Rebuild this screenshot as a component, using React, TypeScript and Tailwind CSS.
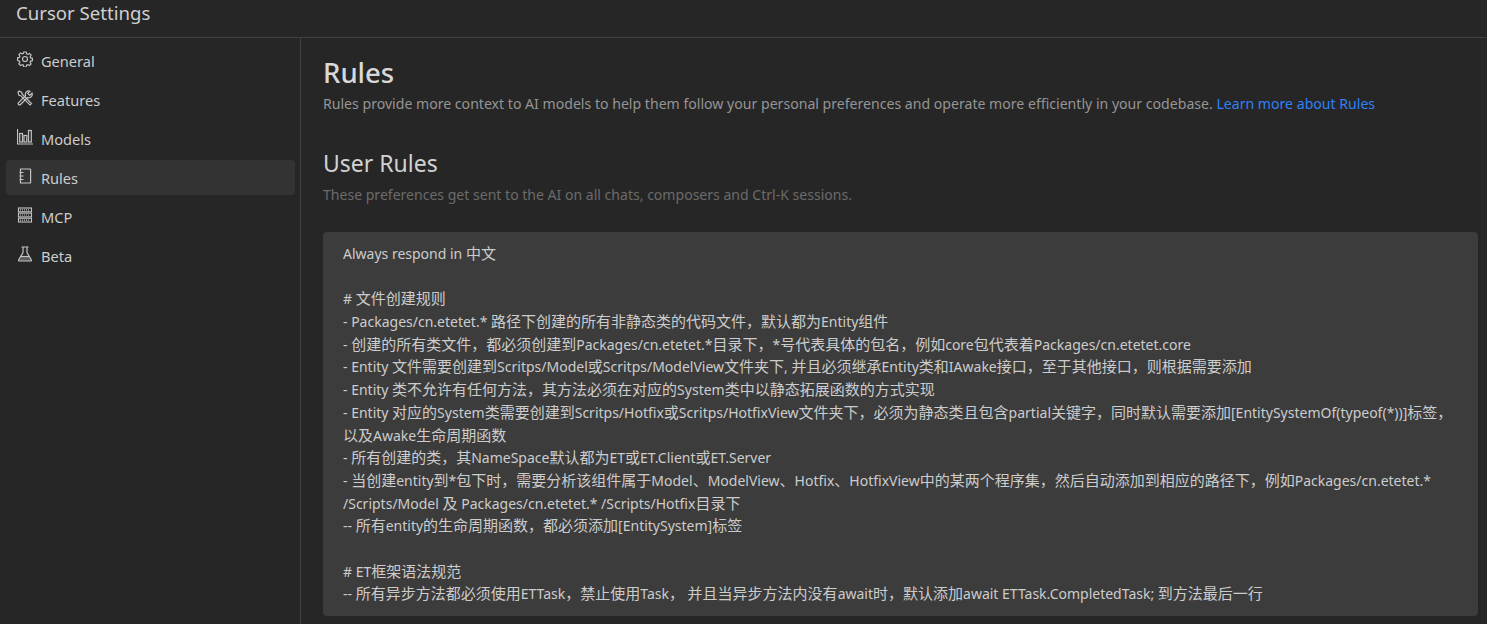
import type { ReactNode } from "react";

const font = "font-['Noto_Sans','Noto_Sans_CJK_SC',sans-serif]";

const GearIcon = () => (
  <svg width="16" height="16" viewBox="0 0 16 16" fill="none" stroke="currentColor" strokeWidth="1.2">
    <path d="M6.8 1h2.4l.4 1.9 1.1.5 1.7-1 1.7 1.7-1 1.7.5 1.1 1.9.4v2.4l-1.9.4-.5 1.1 1 1.7-1.7 1.7-1.7-1-1.1.5-.4 1.9H6.8l-.4-1.9-1.1-.5-1.7 1-1.7-1.7 1-1.7-.5-1.1L.5 9.2V6.8l1.9-.4.5-1.1-1-1.7 1.7-1.7 1.7 1 1.1-.5z" />
    <circle cx="8" cy="8" r="2.5" />
  </svg>
);

const ToolsIcon = () => (
  <svg width="16" height="16" viewBox="0 0 16 16" fill="none" stroke="currentColor" strokeWidth="1.2">
    <path d="M1 2.2 2.2 1l2.6 1.4.4 1.8 9.3 9.3-1.5 1.5-9.3-9.3-1.8-.4z" />
    <path d="M15 3.2 12.8 5.4 10.8 3.4 13 1.2A3.4 3.4 0 0 0 8.6 5.6L1.6 12.6a1.3 1.3 0 0 0 1.9 1.9l7-7A3.4 3.4 0 0 0 15 3.2z" />
  </svg>
);

const BarsIcon = () => (
  <svg width="16" height="16" viewBox="0 0 16 16" fill="none" stroke="currentColor" strokeWidth="1.2">
    <path d="M.5 0v15H16" />
    <rect x="2.7" y="4.5" width="2.8" height="8.5" />
    <rect x="7" y="6.5" width="2.8" height="6.5" />
    <rect x="11.5" y="1.5" width="2.8" height="11.5" />
  </svg>
);

const NotebookIcon = () => (
  <svg width="16" height="16" viewBox="0 0 16 16" fill="none" stroke="currentColor" strokeWidth="1.2">
    <path d="M3.5 1h9.5a.6.6 0 0 1 .6.6v12.8a.6.6 0 0 1-.6.6H3.5z" />
    <path d="M2.5 4.5h4M2.5 8h4M2.5 11.5h4" />
  </svg>
);

const ServerIcon = () => (
  <svg width="16" height="16" viewBox="0 0 16 16" fill="none" stroke="currentColor" strokeWidth="1.1">
    <rect x="1.5" y="1" width="13" height="3.8" />
    <rect x="1.5" y="6.1" width="13" height="3.8" />
    <rect x="1.5" y="11.2" width="13" height="3.8" />
    <path d="M3 2.9h10M3 8h10M3 13.1h10" strokeDasharray="1 1" />
  </svg>
);

const FlaskIcon = () => (
  <svg width="16" height="16" viewBox="0 0 16 16" fill="none" stroke="currentColor" strokeWidth="1.2">
    <path d="M4.5 1h7M6 1v5.5L1.6 14a.7.7 0 0 0 .6 1h11.6a.7.7 0 0 0 .6-1L10 6.5V1" />
    <path d="M4 10.5h8l2 4.5H2z" fill="currentColor" fillOpacity="0.35" stroke="none" />
    <path d="M3.8 10.5h8.4" />
  </svg>
);

const navItems: { label: string; icon: ReactNode; active?: boolean }[] = [
  { label: "General", icon: <GearIcon /> },
  { label: "Features", icon: <ToolsIcon /> },
  { label: "Models", icon: <BarsIcon /> },
  { label: "Rules", icon: <NotebookIcon />, active: true },
  { label: "MCP", icon: <ServerIcon /> },
  { label: "Beta", icon: <FlaskIcon /> },
];

const ruleLines = [
  "Always respond in 中文",
  "",
  "# 文件创建规则",
  "- Packages/cn.etetet.* 路径下创建的所有非静态类的代码文件，默认都为Entity组件",
  "- 创建的所有类文件，都必须创建到Packages/cn.etetet.*目录下，*号代表具体的包名，例如core包代表着Packages/cn.etetet.core",
  "- Entity 文件需要创建到Scritps/Model或Scritps/ModelView文件夹下, 并且必须继承Entity类和IAwake接口，至于其他接口，则根据需要添加",
  "- Entity 类不允许有任何方法，其方法必须在对应的System类中以静态拓展函数的方式实现",
  "- Entity 对应的System类需要创建到Scritps/Hotfix或Scritps/HotfixView文件夹下，必须为静态类且包含partial关键字，同时默认需要添加[EntitySystemOf(typeof(*))]标签，",
  "以及Awake生命周期函数",
  "- 所有创建的类，其NameSpace默认都为ET或ET.Client或ET.Server",
  "- 当创建entity到*包下时，需要分析该组件属于Model、ModelView、Hotfix、HotfixView中的某两个程序集，然后自动添加到相应的路径下，例如Packages/cn.etetet.*",
  "/Scripts/Model 及 Packages/cn.etetet.* /Scripts/Hotfix目录下",
  "-- 所有entity的生命周期函数，都必须添加[EntitySystem]标签",
  "",
  "# ET框架语法规范",
  "-- 所有异步方法都必须使用ETTask，禁止使用Task， 并且当异步方法内没有await时，默认添加await ETTask.CompletedTask; 到方法最后一行",
];

// chinese runs sit at 15px, the latin font reads right a notch smaller
function RuleLine({ text }: { text: string }) {
  const parts = text.split(/([\u3000-\u303f\u4e00-\u9fff\uff00-\uffef]+)/);
  return (
    <div className="h-[22.7px] whitespace-pre">
      {parts.map((part, i) =>
        i % 2 === 1 ? (
          <span key={i} className="text-[15px]">
            {part}
          </span>
        ) : (
          <span key={i}>{part}</span>
        ),
      )}
    </div>
  );
}

export default function App() {
  return (
    <div className={`${font} flex h-[624px] flex-col overflow-hidden bg-[#262626] text-[#cccccc]`}>
      <header className="flex h-[38px] shrink-0 items-start border-b border-[#414141] pl-4">
        <h1 className="text-[18.6px] leading-[25px] text-[#cfcfcf]">Cursor Settings</h1>
      </header>

      <div className="flex min-h-0 flex-1">
        <nav className="flex w-[301px] shrink-0 flex-col gap-1 border-r border-[#414141] pt-[5px] pl-[6px] pr-[5px]">
          {navItems.map((item) => (
            <div
              key={item.label}
              className={`flex h-[35px] items-center gap-2 rounded pl-[11px] text-[14.6px] ${
                item.active ? "bg-[#333333]" : ""
              }`}
            >
              <span className="-mt-[4px] flex w-4 justify-center text-[#c4c4c4]">{item.icon}</span>
              <span className="pt-[3px]">{item.label}</span>
            </div>
          ))}
        </nav>

        <main className="min-w-0 flex-1 pl-[22px] pr-[9px] pt-[17px]">
          <h2 className="text-[27.5px] leading-[36px] font-medium text-[#d8d8d8]">Rules</h2>
          <p className="mt-[3px] text-[14.1px] leading-[20px] whitespace-nowrap text-[#959595]">
            Rules provide more context to AI models to help them follow your personal preferences and operate more efficiently in your codebase.{" "}
            <a className="text-[#2f81f7]">Learn more about Rules</a>
          </p>

          <h3 className="mt-[33px] text-[23px] leading-[32px] text-[#d2d2d2]">User Rules</h3>
          <p className="mt-[6px] text-[14.05px] leading-[20px] text-[#6b6b6b]">
            These preferences get sent to the AI on all chats, composers and Ctrl-K sessions.
          </p>

          <div className="mt-[27px] h-[384px] rounded bg-[#3c3c3c] px-5 pt-[10px] text-[14px] leading-[22.7px] text-[#cccccc]">
            {ruleLines.map((line, i) => (
              <RuleLine key={i} text={line} />
            ))}
          </div>
        </main>
      </div>
    </div>
  );
}
